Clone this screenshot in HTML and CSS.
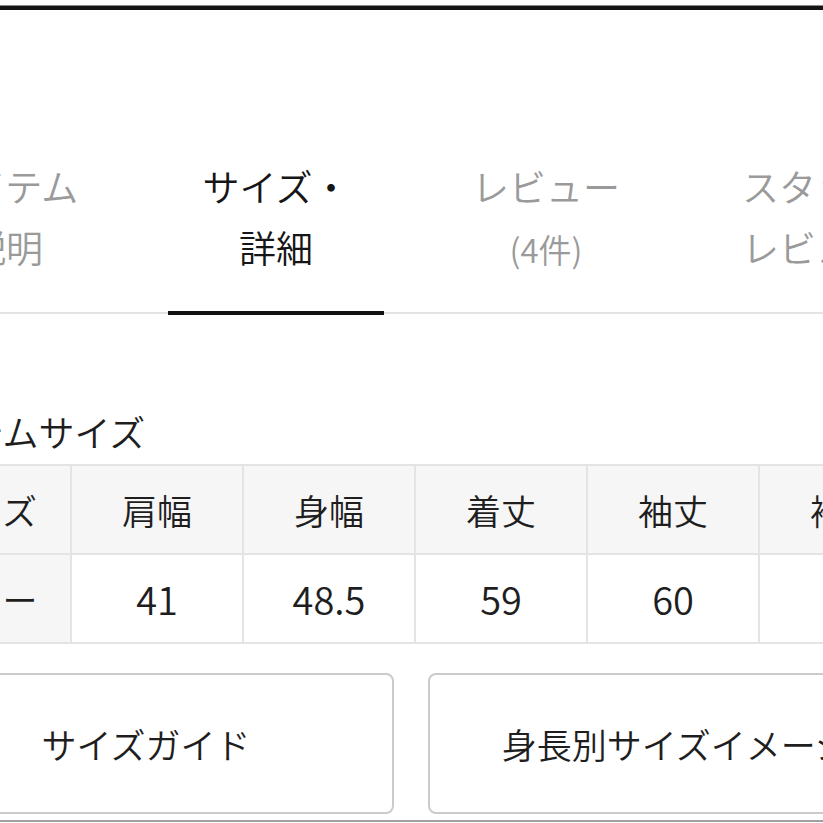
FILE: index.html
```html
<!DOCTYPE html>
<html lang="ja">
<head>
<meta charset="utf-8">
<link rel="stylesheet" href="styles.css">
</head>
<body>
<div class="page">
  <div class="top-line"></div>
  <nav class="tabs">
    <div class="tab"><div class="tab-label">アイテム<br>説明</div></div>
    <div class="tab active"><div class="tab-label">サイズ・<br>詳細</div></div>
    <div class="tab"><div class="tab-label">レビュー<br><span class="small">(4件)</span></div></div>
    <div class="tab"><div class="tab-label">スタッフ<br>レビュー</div></div>
  </nav>
  <section class="content">
    <h2 class="title">アイテムサイズ</h2>
    <table class="size-table">
      <tr>
        <th>サイズ</th><th>肩幅</th><th>身幅</th><th>着丈</th><th>袖丈</th><th>裄丈</th>
      </tr>
      <tr>
        <th>フリー</th><td>41</td><td>48.5</td><td>59</td><td>60</td><td>80</td>
      </tr>
    </table>
    <div class="buttons">
      <div class="btn">サイズガイド</div>
      <div class="btn">身長別サイズイメージ</div>
    </div>
  </section>
  <div class="bottom-line"></div>
</div>
</body>
</html>
```

FILE: styles.css
```css
html, body {
  margin: 0;
  padding: 0;
  overflow: hidden;
  background: #fff;
}
body {
  width: 823px;
  height: 823px;
  font-family: "Noto Sans CJK JP", "Noto Sans", sans-serif;
  font-weight: 350;
  color: #1a1a1a;
}
.page {
  width: 823px;
  overflow: hidden;
}
.top-line {
  margin-top: 5px;
  height: 4px;
  background: #141414;
  border-top: 1px solid #8a8a8a;
}
.tabs {
  display: flex;
  margin: 146px 0 0 -129px;
  border-bottom: 2px solid #e3e3e3;
}
.tab {
  flex: 0 0 270px;
  display: flex;
  justify-content: center;
}
.tab-label {
  width: 216px;
  text-align: center;
  font-size: 37px;
  line-height: 61px;
  color: #9a9a9a;
  padding-bottom: 31px;
  border-bottom: 4px solid transparent;
  margin-bottom: -3px;
  white-space: nowrap;
}
.tab-label .small {
  font-size: 33px;
}
.tab.active .tab-label {
  color: #161616;
  border-bottom-color: #111;
}
.content {
  margin-left: -102px;
}
.title {
  margin: 97px 0 13px;
  font-size: 36px;
  line-height: 40px;
  font-weight: 350;
  color: #1e1e1e;
}
.size-table {
  border-collapse: collapse;
  table-layout: fixed;
  width: 1032px;
}
.size-table th,
.size-table td {
  width: 170px;
  height: 87px;
  border: 2px solid #e4e4e4;
  text-align: center;
  font-size: 35px;
  font-weight: 350;
  color: #1e1e1e;
  padding: 0;
}
.size-table th {
  background: #f6f6f6;
}
.size-table td {
  background: #fff;
  font-size: 38px;
}
.buttons {
  display: flex;
  gap: 34px;
  margin-top: 29px;
}
.btn {
  flex: 0 0 496px;
  box-sizing: border-box;
  height: 141px;
  border: 2px solid #cbcbcb;
  border-radius: 8px;
  display: flex;
  align-items: center;
  justify-content: center;
  font-size: 35px;
  color: #1e1e1e;
  white-space: nowrap;
}
.bottom-line {
  margin-top: 6px;
  height: 2px;
  background: #a0a0a0;
}
```
